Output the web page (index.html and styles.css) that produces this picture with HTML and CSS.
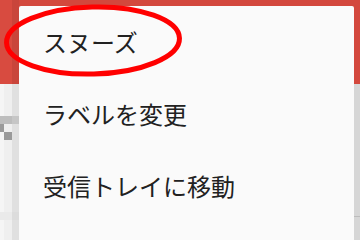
FILE: index.html
```html
<!DOCTYPE html>
<html lang="ja">
<head>
<meta charset="utf-8">
<link rel="stylesheet" href="styles.css">
</head>
<body>
<div class="screen">
  <div class="header">
    <div class="h-main"></div>
    <div class="h-dark"></div>
    <div class="h-rest"></div>
  </div>
  <div class="content">
    <div class="strip">
      <span class="c l1"></span><span class="c l2"></span><span class="c l3"></span>
      <span class="c g1"></span><span class="c g1"></span><span class="c g2"></span>
      <span class="c d"></span><span class="c l2"></span><span class="c l3"></span>
      <span class="c l1"></span><span class="c d"></span><span class="c l3"></span>
      <span class="c l1"></span><span class="c l2"></span><span class="c l3"></span>
      <span class="c b1"></span><span class="c b1"></span><span class="c b2"></span>
      <span class="c l1"></span><span class="c l2"></span><span class="c l3"></span>
    </div>
    <div class="middle"></div>
    <div class="rstrip">
      <div class="r-top"></div>
      <div class="r-line"></div>
      <div class="r-bot"></div>
    </div>
  </div>
  <div class="menu">
    <div class="item">スヌーズ</div>
    <div class="item">ラベルを変更</div>
    <div class="item">受信トレイに移動</div>
  </div>
  <svg class="mark" width="360" height="240" viewBox="0 0 360 240">
    <ellipse cx="93" cy="40.5" rx="86.5" ry="33.5" fill="none" stroke="#ff0000" stroke-width="5" transform="rotate(-1.5 93 40.5)"/>
  </svg>
</div>
</body>
</html>
```
FILE: styles.css
```css
html, body {
  margin: 0;
  padding: 0;
}
body {
  width: 360px;
  height: 240px;
  overflow: hidden;
  background: #f2f2f2;
  font-family: "Noto Sans CJK JP", "Noto Sans", sans-serif;
}
.screen {
  position: relative;
  width: 360px;
  height: 240px;
  overflow: hidden;
  display: flex;
  flex-direction: column;
}
.header {
  height: 84px;
  display: flex;
  flex: none;
}
.h-main {
  width: 12px;
  background: #d84b40;
}
.h-dark {
  width: 7px;
  background: #c9453b;
}
.h-rest {
  flex: 1;
  background: #d3483d;
}
.content {
  flex: 1;
  display: flex;
}
.strip {
  width: 19px;
  display: grid;
  grid-template-columns: 4px 8px 7px;
  grid-template-rows: 32px 8px 8px 8px 72px 8px 1fr;
}
.c { display: block; }
.l1 { background: #f5f5f5; }
.l2 { background: #efefef; }
.l3 { background: #e0e0e0; }
.g1 { background: #bdbdbd; }
.g2 { background: #c6c6c6; }
.d { background: #9a9a9a; }
.b1 { background: #eaeaea; }
.b2 { background: #dcdcdc; }
.middle {
  flex: 1;
  background: #f2f2f2;
}
.rstrip {
  width: 6px;
  display: flex;
  flex-direction: column;
}
.r-top {
  height: 132px;
  background: #d6d6d6;
}
.r-line {
  height: 1px;
  background: #bcbcbc;
}
.r-bot {
  flex: 1;
  background: #d6d6d6;
}
.menu {
  position: absolute;
  left: 19px;
  top: 6px;
  width: 335px;
  height: 260px;
  background: #fafafa;
  border-radius: 2px;
}
.item {
  height: 72px;
  display: flex;
  align-items: center;
  padding-left: 24px;
  font-size: 24px;
  color: #212121;
  line-height: 1;
}
.mark {
  position: absolute;
  left: 0;
  top: 0;
}
```
